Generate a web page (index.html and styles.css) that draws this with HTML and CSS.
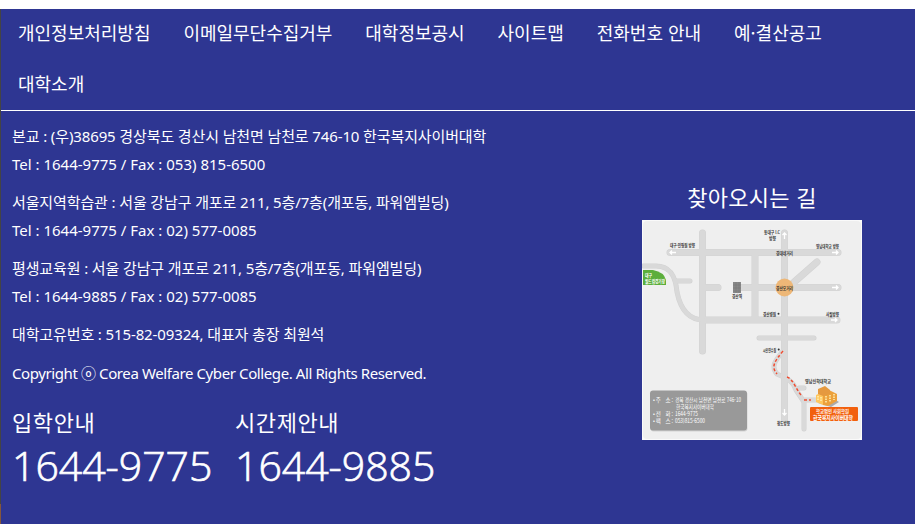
FILE: index.html
```html
<!DOCTYPE html>
<html lang="ko">
<head>
<meta charset="utf-8">
<title>한국복지사이버대학</title>
<link rel="stylesheet" href="styles.css">
</head>
<body>
<footer class="footer">
  <nav class="links">
    <a>개인정보처리방침</a><a>이메일무단수집거부</a><a>대학정보공시</a><a>사이트맵</a><a>전화번호 안내</a><a>예·결산공고</a><a>대학소개</a>
  </nav>
  <div class="content">
    <div class="info">
      <address class="address">
        <p>본교 : (우)38695 경상북도 경산시 남천면 남천로 746-10 한국복지사이버대학<br><span class="tel">Tel : 1644-9775 / Fax : 053) 815-6500</span></p>
        <p>서울지역학습관 : 서울 강남구 개포로 211, 5층/7층(개포동, 파워엠빌딩)<br><span class="tel">Tel : 1644-9775 / Fax : 02) 577-0085</span></p>
        <p>평생교육원 : 서울 강남구 개포로 211, 5층/7층(개포동, 파워엠빌딩)<br><span class="tel">Tel : 1644-9885 / Fax : 02) 577-0085</span></p>
        <p>대학고유번호 : 515-82-09324, 대표자 총장 최원석</p>
        <p class="copyright">Copyright ⓞ Corea Welfare Cyber College. All Rights Reserved.</p>
      </address>
      <div class="phones">
        <div class="phone"><h2>입학안내</h2><strong>1644-9775</strong></div>
        <div class="phone"><h2>시간제안내</h2><strong>1644-9885</strong></div>
      </div>
    </div>
    <section class="location">
      <h2>찾아오시는 길</h2>
      <svg class="map" viewBox="0 0 220 220" role="img">
        <rect width="220" height="220" fill="#fafafa"/>
        <rect x="1" y="1" width="218" height="218" rx="4" fill="#efefef"/>
        <g class="road-edge">
          <path d="M60.500 13V131M142.500 13V199M28 32.500H196M113 32.500V100M63 67.500H76M98 67.500H196M60 100H195M142 71L175 42"/>
          <path class="mid" d="M117 118H172"/>
          <path class="mid" d="M1 46H14C31 46 34 61 35 72C39 92 49 100 62 100M35 61H48"/>
          <path class="mid" d="M141 131C132 142 129 147 135 154C143 158 151 160 154 170L162 182V209M157 168H162M162 180H177"/>
        </g>
        <g class="road">
          <path d="M60.500 13V131M142.500 13V199M28 32.500H196M113 32.500V100M63 67.500H76M98 67.500H196M60 100H195M142 71L175 42"/>
          <path class="mid" d="M117 118H172"/>
          <path class="mid" d="M1 46H14C31 46 34 61 35 72C39 92 49 100 62 100M35 61H48"/>
          <path class="mid" d="M141 131C132 142 129 147 135 154C143 158 151 160 154 170L162 182V209M157 168H162M162 180H177"/>
        </g>
        <path d="M1 50H11Q22 52 24 60V65H1Z" fill="#5cae3c"/>
        <g class="green"><text x="3" y="57" textLength="7" lengthAdjust="spacingAndGlyphs">대구</text><text x="3" y="62.500" textLength="20" lengthAdjust="spacingAndGlyphs">월드컵경기장</text></g>
        <rect x="91" y="62" width="8" height="11" fill="#888"/>
        <path d="M91 65H99M91 68H99M91 71H99M94 62V73M97 62V73" stroke="#777" stroke-width=".5"/>
        <circle cx="142.500" cy="67.500" r="9" fill="#edb777"/>
        <g class="arrow">
          <path d="M34 32.500H28M30 30.500L28 32.500L30 34.500"/>
          <path d="M190 32.500H196M194 30.500L196 32.500L194 34.500M190 67.500H196M194 65.500L196 67.500L194 69.500M189 100H195M193 98L195 100L193 102"/>
          <path d="M142.500 19V13M140.500 15L142.500 13L144.500 15M142.500 189V195M140.500 193L142.500 195L144.500 193"/>
        </g>
        <path d="M141 131C132 142 129 147 135 154M145 157C151 159 154 169 159 175M162 180H169" class="route"/>
        <g class="label">
          <text x="28" y="27" textLength="25" lengthAdjust="spacingAndGlyphs">대구·인평원 방향</text>
          <text x="122" y="13.500" textLength="16" lengthAdjust="spacingAndGlyphs">동대구 I.C</text>
          <text x="127" y="19.500" textLength="7" lengthAdjust="spacingAndGlyphs">방향</text>
          <text x="174" y="27.500" textLength="23" lengthAdjust="spacingAndGlyphs">영남대학교 방향</text>
          <text x="134" y="34.500" textLength="17" lengthAdjust="spacingAndGlyphs">경대네거리</text>
          <text x="134" y="69.500" textLength="17" lengthAdjust="spacingAndGlyphs">경산오거리</text>
          <text x="90" y="78" textLength="10" lengthAdjust="spacingAndGlyphs">경산역</text>
          <text x="121" y="95.500" textLength="13" lengthAdjust="spacingAndGlyphs">경산병원</text>
          <text x="184" y="95.500" textLength="13" lengthAdjust="spacingAndGlyphs">사월방향</text>
          <text x="121" y="131.500" textLength="13" lengthAdjust="spacingAndGlyphs">시민연수원</text>
          <text x="163" y="163" textLength="26" lengthAdjust="spacingAndGlyphs">영남신학대학교</text>
          <text x="135" y="204.500" textLength="13" lengthAdjust="spacingAndGlyphs">청도방향</text>
          <circle cx="136.500" cy="93.800" r="1"/><circle cx="136.700" cy="129.500" r="1"/>
        </g>
        <path d="M176 183L189 187L197 182L189 177Z" fill="#ababab"/>
        <path d="M174 175L181 172V185L174 182Z" fill="#ffc65d"/>
        <path d="M181 185V174L187 170L195 174V181L186 186Z" fill="#eca13c"/>
        <path d="M176 174V169L183 166L188 170V174L181 176Z" fill="#e5993f"/>
        <path d="M176 176V181M179 177V182M184 176V183M188 175V182M192 174V180" stroke="#fff1b5" stroke-width="1.500" stroke-dasharray="1.500 1"/>
        <rect x="168" y="187" width="48" height="14" rx="1" fill="#f2600d"/>
        <g class="school"><text x="174" y="192.500" textLength="33" lengthAdjust="spacingAndGlyphs" class="small">학교법인 사회학원</text><text x="171" y="199.500" textLength="40" lengthAdjust="spacingAndGlyphs">한국복지사이버대학</text></g>
        <rect x="8.500" y="171.500" width="97" height="40" rx="3" fill="#d4d4d4"/>
        <rect x="8" y="170.500" width="97" height="40" rx="3" fill="#999"/>
        <g class="contact">
          <text x="11" y="181.500" textLength="20">• 주　소 :</text><text x="33" y="181.500" textLength="66" lengthAdjust="spacingAndGlyphs">경북 경산시 남천면 남천로 746-10</text>
          <text x="34" y="188.500" textLength="38" lengthAdjust="spacingAndGlyphs">한국복지사이버대학</text>
          <text x="11" y="195.500" textLength="20">• 전　화 :</text><text x="33" y="195.500" textLength="23" lengthAdjust="spacingAndGlyphs">1644-9775</text>
          <text x="11" y="202.500" textLength="20">• 팩　스 :</text><text x="33" y="202.500" textLength="30" lengthAdjust="spacingAndGlyphs">053)815-6500</text>
        </g>
      </svg>
    </section>
  </div>
</footer>
</body>
</html>
```
FILE: styles.css
```css
* { box-sizing: border-box; }
body { margin: 0; padding-top: 9px; background: #fff; overflow: hidden; }
.footer {
  height: 515px;
  color: #fff;
  background: #2e3692;
  border-left: 1px solid;
  border-image: linear-gradient(#444 0 494px, #85563b 494px) 1;
  font-family: "Noto Sans", "Noto Sans CJK KR", sans-serif;
}
.links {
  display: flex;
  flex-wrap: wrap;
  align-content: flex-start;
  column-gap: 32.9px;
  height: 102px;
  padding: 0 17px;
  border-bottom: 1px solid #fff;
  font: 18px/47px "Noto Sans CJK KR", sans-serif;
}
.links a { height: 51px; white-space: nowrap; }
.content { display: flex; }
.info { width: 641px; padding: 11px 0 0 11px; }
.address { font: 15px/28px "Noto Sans", "Noto Sans CJK KR", sans-serif; letter-spacing: -0.12px; white-space: nowrap; }
.address p { margin: 0 0 10px; }
.tel { letter-spacing: 0; }
.address .copyright { margin-top: 11px; letter-spacing: -0.4px; }
.phones { display: flex; margin-top: 18px; }
.phone { width: 223px; }
h2 { margin: 0; font: 22px/32px "Noto Sans CJK KR", sans-serif; letter-spacing: 0.3px; white-space: nowrap; }
.phone h2 { letter-spacing: 0.6px; }
.phone strong { display: block; font: 300 41px/56px "Open Sans", sans-serif; -webkit-text-stroke: 0.7px #fff; }
.location { width: 220px; padding-top: 69px; }
.location h2 { text-align: center; }
.map { display: block; width: 220px; height: 220px; margin-top: 8px; }
.road, .road-edge { fill: none; stroke: #d9d9d9; stroke-width: 6px; stroke-linecap: round; stroke-linejoin: round; }
.road-edge { stroke: #d2d2d2; stroke-width: 7px; }
.mid { stroke-width: 4px; }
.road-edge .mid { stroke-width: 5px; }
.arrow { fill: none; stroke: #fff; stroke-width: 1.3px; }
.route { fill: none; stroke: #f04c31; stroke-width: 1.5px; stroke-dasharray: 3px 2px; }
.map text { font-family: "Noto Sans CJK KR", sans-serif; font-size: 5px; }
.map .label text { font-size: 4.5px; font-weight: bold; }
.label { fill: #333; }
.green, .school, .contact { fill: #fff; }
.map .green text { font-size: 5px; font-weight: bold; }
.map .contact text { font-size: 5.5px; }
.map .school text { font-size: 6px; font-weight: bold; }
.map .school .small { font-size: 5px; }
```
